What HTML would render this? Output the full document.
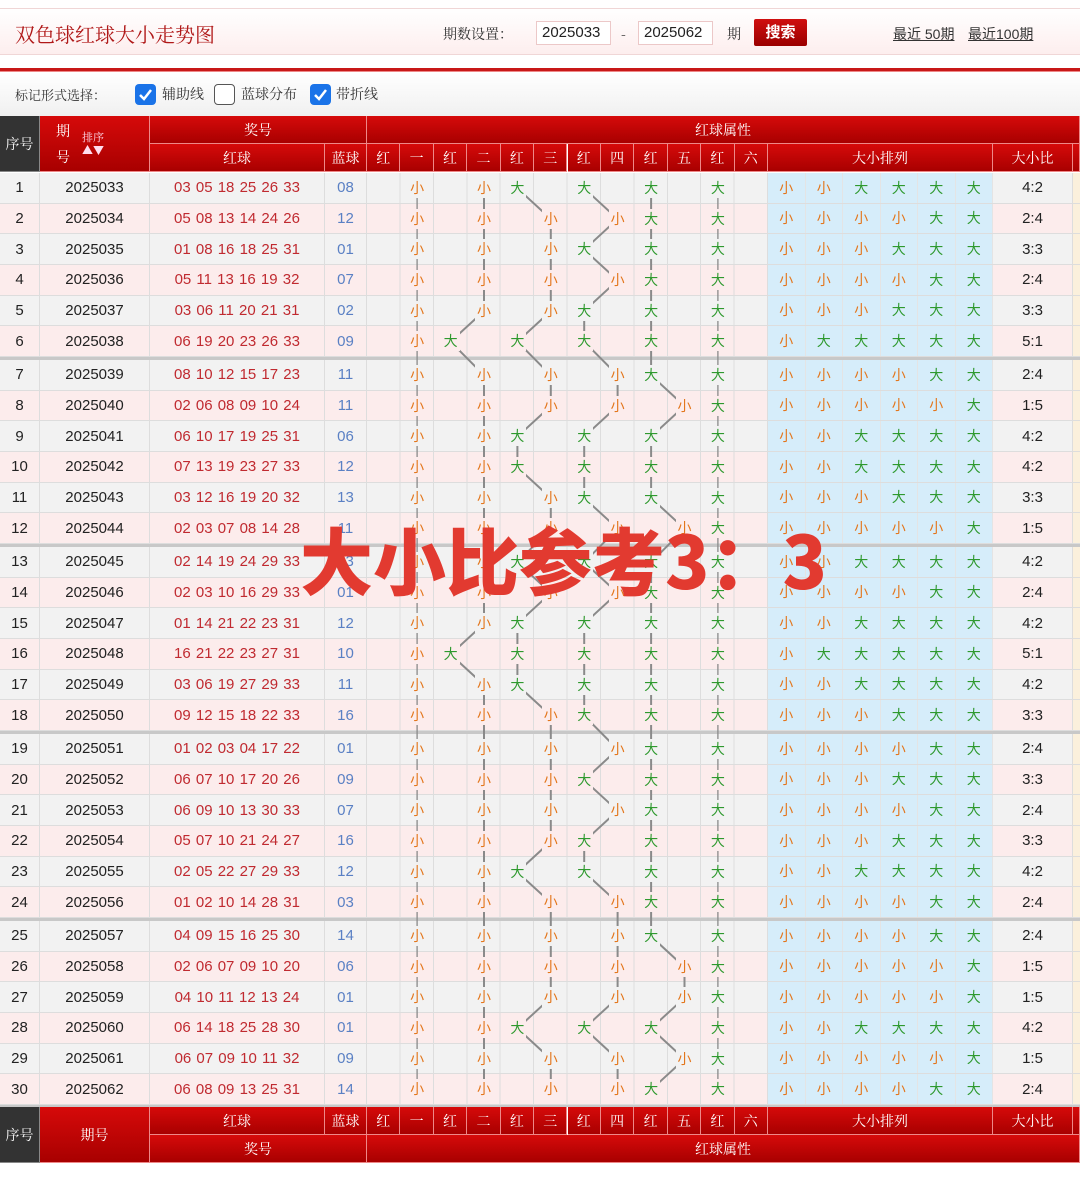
<!DOCTYPE html>
<html><head><meta charset="utf-8"><style>
*{margin:0;padding:0;box-sizing:border-box}
body{width:1080px;height:1185px;position:relative;background:#fff;font-family:"Liberation Sans","Noto Sans CJK SC",sans-serif;overflow:hidden}
.top{position:absolute;left:0;top:8px;width:1080px;height:47px;background:linear-gradient(#fff,#fdeeee);border-top:1px solid #f0d6d6;border-bottom:1px solid #f0d6d6}
.tt{position:absolute;left:15px;top:19px;font:20px "Noto Serif CJK SC",serif;color:#b01818}
.lb{position:absolute;font-size:14px;color:#333;font-family:"Noto Serif CJK SC","Noto Sans CJK SC",serif}
.inp{position:absolute;top:21px;height:24px;width:75px;border:1px solid #ecc8c8;background:#fff;font-size:15px;color:#222;padding-left:5px;line-height:22px}
.btn{position:absolute;left:754px;top:19px;width:53px;height:27px;background:linear-gradient(#d01010,#9a0000);color:#fff;font-weight:bold;font-size:15px;text-align:center;line-height:27px;border-radius:2px}
.lk{position:absolute;top:24px;font-size:14px;color:#333;text-decoration:underline}
.rl{position:absolute;left:0;top:68px;width:1080px;height:4px;background:#c81818;border-bottom:1px solid #e88}
.opt{position:absolute;left:0;top:73px;width:1080px;height:43px;background:linear-gradient(#fff,#f0f0f0)}
.cb{position:absolute;top:84px;width:21px;height:21px;border-radius:4px;background:#1a73e8}
.cb.u{background:#fff;border:1.5px solid #555}
.cb svg{position:absolute;left:3px;top:3px}
.h{position:absolute;color:#fff;font-size:14px;text-align:center;background:linear-gradient(#d60a0a,#a80000);border-right:1px solid #e88;border-bottom:1px solid #e88;display:flex;align-items:center;justify-content:center;font-family:"Noto Serif CJK SC","Noto Sans CJK SC",serif}
.h.dk{background:#333;border-color:#888}
.body{position:absolute;left:0;top:173px;width:1080px;height:934px;background:#c8c8c8}
.r{position:absolute;left:0;width:1080px;height:30.67px;display:grid;grid-template-columns:40px 110px 175px 42px 401px repeat(6,37.5px) 80px 7px;border-bottom:1px solid #ddd}
.r.o{background:#f2f2f2}.r.e{background:#fcecec}
.r>b{font-weight:normal;display:flex;align-items:center;justify-content:center;border-right:1px solid #ddd;font-size:15px;color:#222}
.r>b.rd{color:#c02a30;word-spacing:1px}
.r>b.bl{color:#5a80c4}
.r>b.m{background-image:repeating-linear-gradient(90deg,transparent 0 32.42px,#ddd 32.42px 33.42px)}
.r>b.p{background:#d6edfa;font-size:14px;border-right:1px solid #e4e4e4}
.r>b.z{background:#fbf0dc;border:none}
.q,.r>b.q{color:#e3761c}.d,.r>b.d{color:#2e992e}
.r>i{position:absolute;top:5px;width:18px;height:20px;font-style:normal;font-size:14px;line-height:20px;text-align:center;z-index:2}
.r.o>i{background:#f2f2f2}.r.e>i{background:#fcecec}
.x0{left:374.7px}.x1{left:408.1px}.x2{left:441.6px}.x3{left:475px}.x4{left:508.4px}.x5{left:541.8px}.x6{left:575.2px}.x7{left:608.6px}.x8{left:642.1px}.x9{left:675.5px}.x10{left:708.9px}.x11{left:742.3px}
svg.ln{position:absolute;left:0;top:0;z-index:1}
.wm{position:absolute;left:300px;top:505px;font:900 73px "Noto Sans CJK SC",sans-serif;color:#e23a30;z-index:5;letter-spacing:0px;white-space:nowrap}
</style></head><body>
<div class="top"></div>
<div class="tt">双色球红球大小走势图</div>
<div class="lb" style="left:443px;top:24px">期数设置：</div>
<div class="inp" style="left:536px">2025033</div>
<div class="lb" style="left:621px;top:24px">-</div>
<div class="inp" style="left:638px">2025062</div>
<div class="lb" style="left:727px;top:24px">期</div>
<div class="btn">搜索</div>
<div class="lk" style="left:893px">最近 50期</div>
<div class="lk" style="left:968px">最近100期</div>
<div class="rl"></div>
<div class="opt"></div>
<div class="lb" style="left:15px;top:85px;font-size:13px">标记形式选择：</div>
<div class="cb" style="left:135px"><svg width="15" height="15"><path d="M2 8 L6 12 L13 3" stroke="#fff" stroke-width="2.5" fill="none"/></svg></div>
<div class="lb" style="left:162px;top:84px">辅助线</div>
<div class="cb u" style="left:214px"></div>
<div class="lb" style="left:241px;top:84px">蓝球分布</div>
<div class="cb" style="left:310px"><svg width="15" height="15"><path d="M2 8 L6 12 L13 3" stroke="#fff" stroke-width="2.5" fill="none"/></svg></div>
<div class="lb" style="left:336px;top:84px">带折线</div>

<div class="h dk" style="left:0;top:116px;width:40px;height:56px">序号</div>
<div class="h" style="left:40px;top:116px;width:110px;height:56px;justify-content:flex-start;padding-left:16px"><span style="line-height:26px">期<br>号</span><span style="margin-left:12px;font-size:11px;line-height:13px;color:#fde">排序<br>▲▼</span></div>
<div class="h" style="left:150px;top:116px;width:217px;height:28px">奖号</div>
<div class="h" style="left:367px;top:116px;width:713px;height:28px">红球属性</div>
<div class="h" style="left:150px;top:144px;width:175px;height:28px">红球</div>
<div class="h" style="left:325px;top:144px;width:42px;height:28px">蓝球</div>
<div class="h" style="left:367px;top:144px;width:33.4px;height:28px">红</div>
<div class="h" style="left:400.4px;top:144px;width:33.4px;height:28px">一</div>
<div class="h" style="left:433.8px;top:144px;width:33.4px;height:28px">红</div>
<div class="h" style="left:467.3px;top:144px;width:33.4px;height:28px">二</div>
<div class="h" style="left:500.7px;top:144px;width:33.4px;height:28px">红</div>
<div class="h" style="left:534.1px;top:144px;width:33.4px;height:28px">三</div>
<div class="h" style="left:567.5px;top:144px;width:33.4px;height:28px">红</div>
<div class="h" style="left:600.9px;top:144px;width:33.4px;height:28px">四</div>
<div class="h" style="left:634.4px;top:144px;width:33.4px;height:28px">红</div>
<div class="h" style="left:667.8px;top:144px;width:33.4px;height:28px">五</div>
<div class="h" style="left:701.2px;top:144px;width:33.4px;height:28px">红</div>
<div class="h" style="left:734.6px;top:144px;width:33.4px;height:28px">六</div>
<div class="h" style="left:768px;top:144px;width:225px;height:28px">大小排列</div>
<div class="h" style="left:993px;top:144px;width:80px;height:28px">大小比</div>
<div class="h" style="left:1073px;top:144px;width:7px;height:28px"></div>

<div class="body"></div>

<div class="r o" style="top:173px"><b>1</b><b>2025033</b><b class="rd">03 05 18 25 26 33</b><b class="bl">08</b><b class="m"></b><b class="p q">小</b><b class="p q">小</b><b class="p d">大</b><b class="p d">大</b><b class="p d">大</b><b class="p d">大</b><b>4:2</b><b class="z"></b><i class="q x1">小</i><i class="q x3">小</i><i class="d x4">大</i><i class="d x6">大</i><i class="d x8">大</i><i class="d x10">大</i></div>
<div class="r e" style="top:203.67px"><b>2</b><b>2025034</b><b class="rd">05 08 13 14 24 26</b><b class="bl">12</b><b class="m"></b><b class="p q">小</b><b class="p q">小</b><b class="p q">小</b><b class="p q">小</b><b class="p d">大</b><b class="p d">大</b><b>2:4</b><b class="z"></b><i class="q x1">小</i><i class="q x3">小</i><i class="q x5">小</i><i class="q x7">小</i><i class="d x8">大</i><i class="d x10">大</i></div>
<div class="r o" style="top:234.33px"><b>3</b><b>2025035</b><b class="rd">01 08 16 18 25 31</b><b class="bl">01</b><b class="m"></b><b class="p q">小</b><b class="p q">小</b><b class="p q">小</b><b class="p d">大</b><b class="p d">大</b><b class="p d">大</b><b>3:3</b><b class="z"></b><i class="q x1">小</i><i class="q x3">小</i><i class="q x5">小</i><i class="d x6">大</i><i class="d x8">大</i><i class="d x10">大</i></div>
<div class="r e" style="top:265px"><b>4</b><b>2025036</b><b class="rd">05 11 13 16 19 32</b><b class="bl">07</b><b class="m"></b><b class="p q">小</b><b class="p q">小</b><b class="p q">小</b><b class="p q">小</b><b class="p d">大</b><b class="p d">大</b><b>2:4</b><b class="z"></b><i class="q x1">小</i><i class="q x3">小</i><i class="q x5">小</i><i class="q x7">小</i><i class="d x8">大</i><i class="d x10">大</i></div>
<div class="r o" style="top:295.67px"><b>5</b><b>2025037</b><b class="rd">03 06 11 20 21 31</b><b class="bl">02</b><b class="m"></b><b class="p q">小</b><b class="p q">小</b><b class="p q">小</b><b class="p d">大</b><b class="p d">大</b><b class="p d">大</b><b>3:3</b><b class="z"></b><i class="q x1">小</i><i class="q x3">小</i><i class="q x5">小</i><i class="d x6">大</i><i class="d x8">大</i><i class="d x10">大</i></div>
<div class="r e" style="top:326.33px"><b>6</b><b>2025038</b><b class="rd">06 19 20 23 26 33</b><b class="bl">09</b><b class="m"></b><b class="p q">小</b><b class="p d">大</b><b class="p d">大</b><b class="p d">大</b><b class="p d">大</b><b class="p d">大</b><b>5:1</b><b class="z"></b><i class="q x1">小</i><i class="d x2">大</i><i class="d x4">大</i><i class="d x6">大</i><i class="d x8">大</i><i class="d x10">大</i></div>

<div class="r o" style="top:360px"><b>7</b><b>2025039</b><b class="rd">08 10 12 15 17 23</b><b class="bl">11</b><b class="m"></b><b class="p q">小</b><b class="p q">小</b><b class="p q">小</b><b class="p q">小</b><b class="p d">大</b><b class="p d">大</b><b>2:4</b><b class="z"></b><i class="q x1">小</i><i class="q x3">小</i><i class="q x5">小</i><i class="q x7">小</i><i class="d x8">大</i><i class="d x10">大</i></div>
<div class="r e" style="top:390.67px"><b>8</b><b>2025040</b><b class="rd">02 06 08 09 10 24</b><b class="bl">11</b><b class="m"></b><b class="p q">小</b><b class="p q">小</b><b class="p q">小</b><b class="p q">小</b><b class="p q">小</b><b class="p d">大</b><b>1:5</b><b class="z"></b><i class="q x1">小</i><i class="q x3">小</i><i class="q x5">小</i><i class="q x7">小</i><i class="q x9">小</i><i class="d x10">大</i></div>
<div class="r o" style="top:421.33px"><b>9</b><b>2025041</b><b class="rd">06 10 17 19 25 31</b><b class="bl">06</b><b class="m"></b><b class="p q">小</b><b class="p q">小</b><b class="p d">大</b><b class="p d">大</b><b class="p d">大</b><b class="p d">大</b><b>4:2</b><b class="z"></b><i class="q x1">小</i><i class="q x3">小</i><i class="d x4">大</i><i class="d x6">大</i><i class="d x8">大</i><i class="d x10">大</i></div>
<div class="r e" style="top:452px"><b>10</b><b>2025042</b><b class="rd">07 13 19 23 27 33</b><b class="bl">12</b><b class="m"></b><b class="p q">小</b><b class="p q">小</b><b class="p d">大</b><b class="p d">大</b><b class="p d">大</b><b class="p d">大</b><b>4:2</b><b class="z"></b><i class="q x1">小</i><i class="q x3">小</i><i class="d x4">大</i><i class="d x6">大</i><i class="d x8">大</i><i class="d x10">大</i></div>
<div class="r o" style="top:482.67px"><b>11</b><b>2025043</b><b class="rd">03 12 16 19 20 32</b><b class="bl">13</b><b class="m"></b><b class="p q">小</b><b class="p q">小</b><b class="p q">小</b><b class="p d">大</b><b class="p d">大</b><b class="p d">大</b><b>3:3</b><b class="z"></b><i class="q x1">小</i><i class="q x3">小</i><i class="q x5">小</i><i class="d x6">大</i><i class="d x8">大</i><i class="d x10">大</i></div>
<div class="r e" style="top:513.33px"><b>12</b><b>2025044</b><b class="rd">02 03 07 08 14 28</b><b class="bl">11</b><b class="m"></b><b class="p q">小</b><b class="p q">小</b><b class="p q">小</b><b class="p q">小</b><b class="p q">小</b><b class="p d">大</b><b>1:5</b><b class="z"></b><i class="q x1">小</i><i class="q x3">小</i><i class="q x5">小</i><i class="q x7">小</i><i class="q x9">小</i><i class="d x10">大</i></div>

<div class="r o" style="top:547px"><b>13</b><b>2025045</b><b class="rd">02 14 19 24 29 33</b><b class="bl">13</b><b class="m"></b><b class="p q">小</b><b class="p q">小</b><b class="p d">大</b><b class="p d">大</b><b class="p d">大</b><b class="p d">大</b><b>4:2</b><b class="z"></b><i class="q x1">小</i><i class="q x3">小</i><i class="d x4">大</i><i class="d x6">大</i><i class="d x8">大</i><i class="d x10">大</i></div>
<div class="r e" style="top:577.67px"><b>14</b><b>2025046</b><b class="rd">02 03 10 16 29 33</b><b class="bl">01</b><b class="m"></b><b class="p q">小</b><b class="p q">小</b><b class="p q">小</b><b class="p q">小</b><b class="p d">大</b><b class="p d">大</b><b>2:4</b><b class="z"></b><i class="q x1">小</i><i class="q x3">小</i><i class="q x5">小</i><i class="q x7">小</i><i class="d x8">大</i><i class="d x10">大</i></div>
<div class="r o" style="top:608.33px"><b>15</b><b>2025047</b><b class="rd">01 14 21 22 23 31</b><b class="bl">12</b><b class="m"></b><b class="p q">小</b><b class="p q">小</b><b class="p d">大</b><b class="p d">大</b><b class="p d">大</b><b class="p d">大</b><b>4:2</b><b class="z"></b><i class="q x1">小</i><i class="q x3">小</i><i class="d x4">大</i><i class="d x6">大</i><i class="d x8">大</i><i class="d x10">大</i></div>
<div class="r e" style="top:639px"><b>16</b><b>2025048</b><b class="rd">16 21 22 23 27 31</b><b class="bl">10</b><b class="m"></b><b class="p q">小</b><b class="p d">大</b><b class="p d">大</b><b class="p d">大</b><b class="p d">大</b><b class="p d">大</b><b>5:1</b><b class="z"></b><i class="q x1">小</i><i class="d x2">大</i><i class="d x4">大</i><i class="d x6">大</i><i class="d x8">大</i><i class="d x10">大</i></div>
<div class="r o" style="top:669.67px"><b>17</b><b>2025049</b><b class="rd">03 06 19 27 29 33</b><b class="bl">11</b><b class="m"></b><b class="p q">小</b><b class="p q">小</b><b class="p d">大</b><b class="p d">大</b><b class="p d">大</b><b class="p d">大</b><b>4:2</b><b class="z"></b><i class="q x1">小</i><i class="q x3">小</i><i class="d x4">大</i><i class="d x6">大</i><i class="d x8">大</i><i class="d x10">大</i></div>
<div class="r e" style="top:700.33px"><b>18</b><b>2025050</b><b class="rd">09 12 15 18 22 33</b><b class="bl">16</b><b class="m"></b><b class="p q">小</b><b class="p q">小</b><b class="p q">小</b><b class="p d">大</b><b class="p d">大</b><b class="p d">大</b><b>3:3</b><b class="z"></b><i class="q x1">小</i><i class="q x3">小</i><i class="q x5">小</i><i class="d x6">大</i><i class="d x8">大</i><i class="d x10">大</i></div>

<div class="r o" style="top:734px"><b>19</b><b>2025051</b><b class="rd">01 02 03 04 17 22</b><b class="bl">01</b><b class="m"></b><b class="p q">小</b><b class="p q">小</b><b class="p q">小</b><b class="p q">小</b><b class="p d">大</b><b class="p d">大</b><b>2:4</b><b class="z"></b><i class="q x1">小</i><i class="q x3">小</i><i class="q x5">小</i><i class="q x7">小</i><i class="d x8">大</i><i class="d x10">大</i></div>
<div class="r e" style="top:764.67px"><b>20</b><b>2025052</b><b class="rd">06 07 10 17 20 26</b><b class="bl">09</b><b class="m"></b><b class="p q">小</b><b class="p q">小</b><b class="p q">小</b><b class="p d">大</b><b class="p d">大</b><b class="p d">大</b><b>3:3</b><b class="z"></b><i class="q x1">小</i><i class="q x3">小</i><i class="q x5">小</i><i class="d x6">大</i><i class="d x8">大</i><i class="d x10">大</i></div>
<div class="r o" style="top:795.33px"><b>21</b><b>2025053</b><b class="rd">06 09 10 13 30 33</b><b class="bl">07</b><b class="m"></b><b class="p q">小</b><b class="p q">小</b><b class="p q">小</b><b class="p q">小</b><b class="p d">大</b><b class="p d">大</b><b>2:4</b><b class="z"></b><i class="q x1">小</i><i class="q x3">小</i><i class="q x5">小</i><i class="q x7">小</i><i class="d x8">大</i><i class="d x10">大</i></div>
<div class="r e" style="top:826px"><b>22</b><b>2025054</b><b class="rd">05 07 10 21 24 27</b><b class="bl">16</b><b class="m"></b><b class="p q">小</b><b class="p q">小</b><b class="p q">小</b><b class="p d">大</b><b class="p d">大</b><b class="p d">大</b><b>3:3</b><b class="z"></b><i class="q x1">小</i><i class="q x3">小</i><i class="q x5">小</i><i class="d x6">大</i><i class="d x8">大</i><i class="d x10">大</i></div>
<div class="r o" style="top:856.67px"><b>23</b><b>2025055</b><b class="rd">02 05 22 27 29 33</b><b class="bl">12</b><b class="m"></b><b class="p q">小</b><b class="p q">小</b><b class="p d">大</b><b class="p d">大</b><b class="p d">大</b><b class="p d">大</b><b>4:2</b><b class="z"></b><i class="q x1">小</i><i class="q x3">小</i><i class="d x4">大</i><i class="d x6">大</i><i class="d x8">大</i><i class="d x10">大</i></div>
<div class="r e" style="top:887.33px"><b>24</b><b>2025056</b><b class="rd">01 02 10 14 28 31</b><b class="bl">03</b><b class="m"></b><b class="p q">小</b><b class="p q">小</b><b class="p q">小</b><b class="p q">小</b><b class="p d">大</b><b class="p d">大</b><b>2:4</b><b class="z"></b><i class="q x1">小</i><i class="q x3">小</i><i class="q x5">小</i><i class="q x7">小</i><i class="d x8">大</i><i class="d x10">大</i></div>

<div class="r o" style="top:921px"><b>25</b><b>2025057</b><b class="rd">04 09 15 16 25 30</b><b class="bl">14</b><b class="m"></b><b class="p q">小</b><b class="p q">小</b><b class="p q">小</b><b class="p q">小</b><b class="p d">大</b><b class="p d">大</b><b>2:4</b><b class="z"></b><i class="q x1">小</i><i class="q x3">小</i><i class="q x5">小</i><i class="q x7">小</i><i class="d x8">大</i><i class="d x10">大</i></div>
<div class="r e" style="top:951.67px"><b>26</b><b>2025058</b><b class="rd">02 06 07 09 10 20</b><b class="bl">06</b><b class="m"></b><b class="p q">小</b><b class="p q">小</b><b class="p q">小</b><b class="p q">小</b><b class="p q">小</b><b class="p d">大</b><b>1:5</b><b class="z"></b><i class="q x1">小</i><i class="q x3">小</i><i class="q x5">小</i><i class="q x7">小</i><i class="q x9">小</i><i class="d x10">大</i></div>
<div class="r o" style="top:982.33px"><b>27</b><b>2025059</b><b class="rd">04 10 11 12 13 24</b><b class="bl">01</b><b class="m"></b><b class="p q">小</b><b class="p q">小</b><b class="p q">小</b><b class="p q">小</b><b class="p q">小</b><b class="p d">大</b><b>1:5</b><b class="z"></b><i class="q x1">小</i><i class="q x3">小</i><i class="q x5">小</i><i class="q x7">小</i><i class="q x9">小</i><i class="d x10">大</i></div>
<div class="r e" style="top:1013px"><b>28</b><b>2025060</b><b class="rd">06 14 18 25 28 30</b><b class="bl">01</b><b class="m"></b><b class="p q">小</b><b class="p q">小</b><b class="p d">大</b><b class="p d">大</b><b class="p d">大</b><b class="p d">大</b><b>4:2</b><b class="z"></b><i class="q x1">小</i><i class="q x3">小</i><i class="d x4">大</i><i class="d x6">大</i><i class="d x8">大</i><i class="d x10">大</i></div>
<div class="r o" style="top:1043.67px"><b>29</b><b>2025061</b><b class="rd">06 07 09 10 11 32</b><b class="bl">09</b><b class="m"></b><b class="p q">小</b><b class="p q">小</b><b class="p q">小</b><b class="p q">小</b><b class="p q">小</b><b class="p d">大</b><b>1:5</b><b class="z"></b><i class="q x1">小</i><i class="q x3">小</i><i class="q x5">小</i><i class="q x7">小</i><i class="q x9">小</i><i class="d x10">大</i></div>
<div class="r e" style="top:1074.33px"><b>30</b><b>2025062</b><b class="rd">06 08 09 13 25 31</b><b class="bl">14</b><b class="m"></b><b class="p q">小</b><b class="p q">小</b><b class="p q">小</b><b class="p q">小</b><b class="p d">大</b><b class="p d">大</b><b>2:4</b><b class="z"></b><i class="q x1">小</i><i class="q x3">小</i><i class="q x5">小</i><i class="q x7">小</i><i class="d x8">大</i><i class="d x10">大</i></div>

<svg class="ln" width="1080" height="1185" fill="none" stroke="#8a8a8a" stroke-width="2">
<line x1="417.1" y1="188.3" x2="417.1" y2="1089.8" stroke-width="1.3"/>
<line x1="717.9" y1="188.3" x2="717.9" y2="1089.8" stroke-width="1.3"/>
<polyline points="484,188.3 484,311 450.6,341.7 484,375.3 484,623.7 450.6,654.4 484,685 484,1089.8"/>
<polyline points="517.4,188.3 550.8,219 550.8,249.7 550.8,280.3 550.8,311 517.4,341.7 550.8,375.3 550.8,406 517.4,436.7 517.4,467.3 550.8,498 550.8,528.7 517.4,562.3 550.8,593 517.4,623.7 517.4,654.4 517.4,685 550.8,715.7 550.8,749.4 550.8,780.1 550.8,810.7 550.8,841.4 517.4,872.1 550.8,902.7 550.8,936.4 550.8,967.1 550.8,997.8 517.4,1028.4 550.8,1059.1 550.8,1089.8"/>
<polyline points="584.2,188.3 617.6,219 584.2,249.7 617.6,280.3 584.2,311 584.2,341.7 617.6,375.3 617.6,406 584.2,436.7 584.2,467.3 584.2,498 617.6,528.7 584.2,562.3 617.6,593 584.2,623.7 584.2,654.4 584.2,685 584.2,715.7 617.6,749.4 584.2,780.1 617.6,810.7 584.2,841.4 584.2,872.1 617.6,902.7 617.6,936.4 617.6,967.1 617.6,997.8 584.2,1028.4 617.6,1059.1 617.6,1089.8"/>
<polyline points="651.1,188.3 651.1,375.3 684.5,406 651.1,436.7 651.1,498 684.5,528.7 651.1,562.3 651.1,936.4 684.5,967.1 684.5,997.8 651.1,1028.4 684.5,1059.1 651.1,1089.8"/>
</svg>

<div class="wm">大小比参考3：3</div>

<div class="h dk" style="left:0;top:1107px;width:40px;height:56px">序号</div>
<div class="h" style="left:40px;top:1107px;width:110px;height:56px">期号</div>
<div class="h" style="left:150px;top:1107px;width:175px;height:28px">红球</div>
<div class="h" style="left:325px;top:1107px;width:42px;height:28px">蓝球</div>
<div class="h" style="left:367px;top:1107px;width:33.4px;height:28px">红</div>
<div class="h" style="left:400.4px;top:1107px;width:33.4px;height:28px">一</div>
<div class="h" style="left:433.8px;top:1107px;width:33.4px;height:28px">红</div>
<div class="h" style="left:467.3px;top:1107px;width:33.4px;height:28px">二</div>
<div class="h" style="left:500.7px;top:1107px;width:33.4px;height:28px">红</div>
<div class="h" style="left:534.1px;top:1107px;width:33.4px;height:28px">三</div>
<div class="h" style="left:567.5px;top:1107px;width:33.4px;height:28px">红</div>
<div class="h" style="left:600.9px;top:1107px;width:33.4px;height:28px">四</div>
<div class="h" style="left:634.4px;top:1107px;width:33.4px;height:28px">红</div>
<div class="h" style="left:667.8px;top:1107px;width:33.4px;height:28px">五</div>
<div class="h" style="left:701.2px;top:1107px;width:33.4px;height:28px">红</div>
<div class="h" style="left:734.6px;top:1107px;width:33.4px;height:28px">六</div>
<div class="h" style="left:768px;top:1107px;width:225px;height:28px">大小排列</div>
<div class="h" style="left:993px;top:1107px;width:80px;height:28px">大小比</div>
<div class="h" style="left:1073px;top:1107px;width:7px;height:28px"></div>
<div class="h" style="left:150px;top:1135px;width:217px;height:28px">奖号</div>
<div class="h" style="left:367px;top:1135px;width:713px;height:28px">红球属性</div>
</body></html>
